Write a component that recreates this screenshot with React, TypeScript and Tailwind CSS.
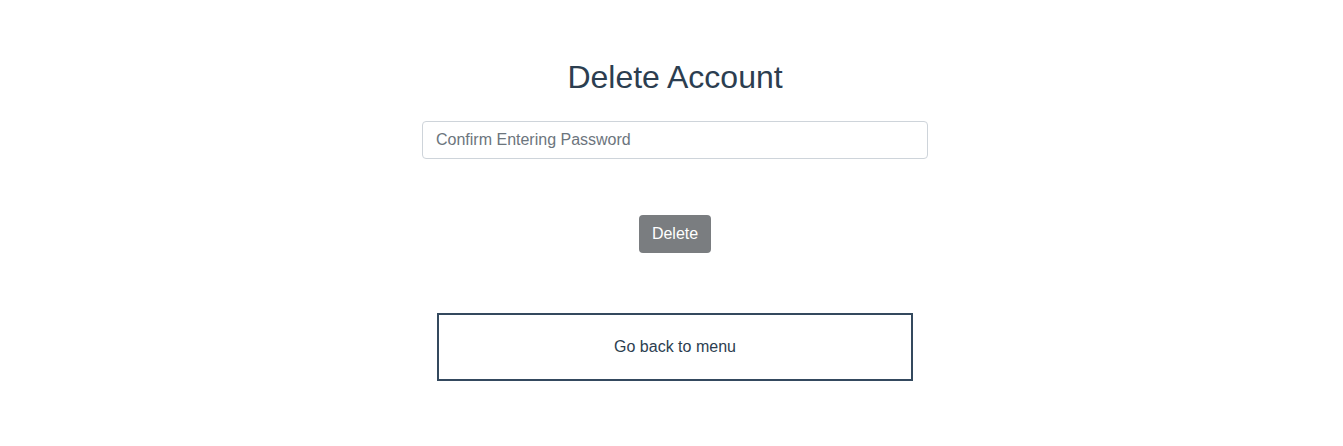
import React from "react";

const App = () => {
  return (
    <div
      className="w-full min-h-[446px] bg-white flex flex-col items-center pl-[7px] text-[#2c3e50]"
      style={{ fontFamily: '"Liberation Sans", Arial, sans-serif' }}
    >
      <h1 className="mt-[58px] text-[32px] leading-[1.2] font-normal">Delete Account</h1>
      <input
        type="password"
        placeholder="Confirm Entering Password"
        className="mt-[25px] w-[506px] h-[38px] px-[13px] border border-[#ced4da] rounded text-base text-[#495057] placeholder:text-[#6c757d] outline-none"
      />
      <button className="mt-[56px] w-[72px] h-[38px] rounded bg-[#7a7d80] text-white text-base">
        Delete
      </button>
      <button className="mt-[60px] w-[476px] h-[68px] border-2 border-[#34495e] text-base text-[#2c3e50]">
        Go back to menu
      </button>
    </div>
  );
};

export default App;
